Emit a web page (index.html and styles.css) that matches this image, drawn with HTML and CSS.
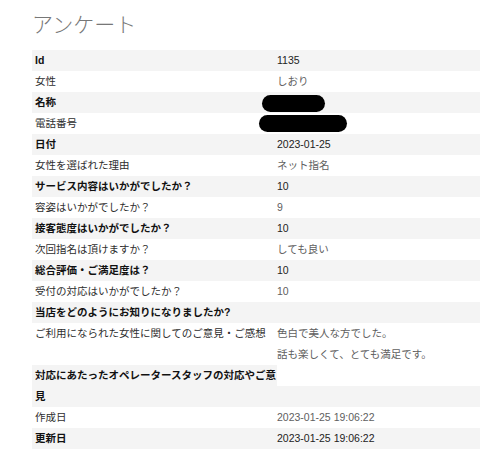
FILE: index.html
```html
<!DOCTYPE html>
<html lang="ja">
<head>
<meta charset="utf-8">
<title>アンケート</title>
<link rel="stylesheet" href="styles.css">
</head>
<body>
<div class="page">
  <h2 class="title">アンケート</h2>
  <dl class="details">
    <dt>Id</dt><dd>1135</dd>
    <dt>女性</dt><dd>しおり</dd>
    <dt>名称</dt><dd><span class="redact redact-name"></span></dd>
    <dt>電話番号</dt><dd><span class="redact redact-tel"></span></dd>
    <dt>日付</dt><dd>2023-01-25</dd>
    <dt>女性を選ばれた理由</dt><dd>ネット指名</dd>
    <dt>サービス内容はいかがでしたか？</dt><dd>10</dd>
    <dt>容姿はいかがでしたか？</dt><dd>9</dd>
    <dt>接客態度はいかがでしたか？</dt><dd>10</dd>
    <dt>次回指名は頂けますか？</dt><dd>しても良い</dd>
    <dt>総合評価・ご満足度は？</dt><dd>10</dd>
    <dt>受付の対応はいかがでしたか？</dt><dd>10</dd>
    <dt>当店をどのようにお知りになりましたか?</dt><dd>&nbsp;</dd>
    <dt>ご利用になられた女性に関してのご意見・ご感想</dt><dd>色白で美人な方でした。<br>話も楽しくて、とても満足です。</dd>
    <dt>対応にあたったオペレータースタッフの対応やご意見</dt><dd>&nbsp;</dd>
    <dt>作成日</dt><dd>2023-01-25 19:06:22</dd>
    <dt>更新日</dt><dd>2023-01-25 19:06:22</dd>
  </dl>
</div>
</body>
</html>
```
FILE: styles.css
```css
html, body {
  margin: 0;
  padding: 0;
  background: #ffffff;
}

.page {
  padding: 8px 0 0 32px;
  font-family: "Liberation Sans", "Noto Sans CJK JP", sans-serif;
}

.title {
  margin: 0 0 12px 0;
  font-size: 21px;
  line-height: 30px;
  font-weight: 300;
  color: #777777;
  font-family: "Noto Sans CJK JP", sans-serif;
}

.details {
  margin: 0;
  display: grid;
  grid-template-columns: 245px 1fr;
  font-size: 10.5px;
  line-height: 21px;
}

.details dt {
  align-self: start;
  padding-left: 3px;
  color: #2e2e2e;
  font-weight: normal;
}

.details dd {
  align-self: end;
  margin: 0;
  color: #606060;
  min-height: 21px;
}

.details dt:nth-of-type(odd) {
  background: #f4f4f4;
  font-weight: bold;
  color: #111;
}

.details dd:nth-of-type(odd) {
  background: #f4f4f4;
  color: #222;
}

.redact {
  display: inline-block;
  height: 17px;
  background: #000;
  border-radius: 9px;
  vertical-align: middle;
}

.redact-name {
  width: 63px;
  margin-left: -15px;
}

.redact-tel {
  width: 88px;
  margin-left: -18px;
  position: relative;
  top: -1px;
}
```
